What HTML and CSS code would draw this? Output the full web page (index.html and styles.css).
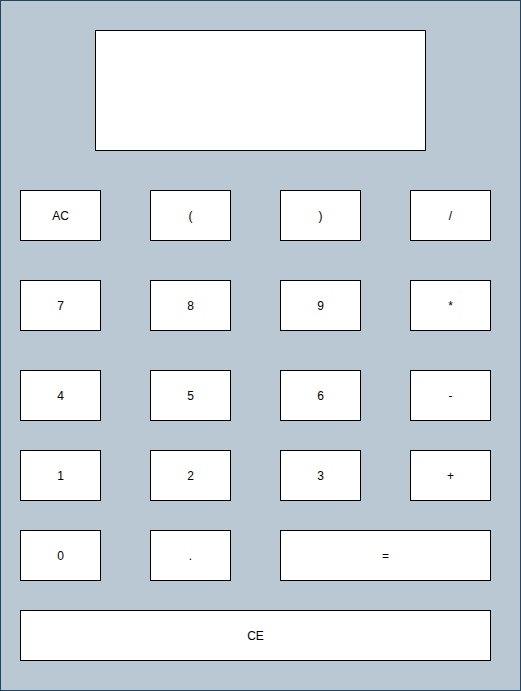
FILE: index.html
```html
<!DOCTYPE html>
<html lang="en">
<head>
<meta charset="utf-8">
<meta name="viewport" content="width=device-width, initial-scale=1">
<title>Calculator</title>
<link rel="stylesheet" href="styles.css">
</head>
<body>
<main class="calculator">
  <input class="display" type="text" aria-label="Display" readonly>
  <div class="keypad">
    <div class="row spaced">
      <button class="key" type="button">AC</button>
      <button class="key" type="button">(</button>
      <button class="key" type="button">)</button>
      <button class="key" type="button">/</button>
    </div>
    <div class="row spaced">
      <button class="key" type="button">7</button>
      <button class="key" type="button">8</button>
      <button class="key" type="button">9</button>
      <button class="key" type="button">*</button>
    </div>
    <div class="row">
      <button class="key" type="button">4</button>
      <button class="key" type="button">5</button>
      <button class="key" type="button">6</button>
      <button class="key" type="button">-</button>
    </div>
    <div class="row">
      <button class="key" type="button">1</button>
      <button class="key" type="button">2</button>
      <button class="key" type="button">3</button>
      <button class="key" type="button">+</button>
    </div>
    <div class="row">
      <button class="key" type="button">0</button>
      <button class="key" type="button">.</button>
      <button class="key wide" type="button">=</button>
    </div>
    <div class="row">
      <button class="key full" type="button">CE</button>
    </div>
  </div>
</main>
</body>
</html>
```

FILE: styles.css
```css
* {
  box-sizing: border-box;
}

body {
  margin: 0;
  font-family: "Liberation Sans", Arial, sans-serif;
  font-size: 12px;
}

.calculator {
  display: flex;
  flex-direction: column;
  gap: 39px;
  min-height: 100vh;
  padding: 29px 29px 29px 19px;
  background: #bac8d3;
  border: 1px solid #23445d;
}

.display {
  height: 121px;
  margin: 0 65px 0 75px;
  padding: 8px 16px;
  font: inherit;
  font-size: 32px;
  text-align: right;
  color: #000;
  background: #fff;
  border: 1px solid #000;
  border-radius: 0;
}

.keypad {
  display: flex;
  flex-direction: column;
  gap: 29px;
}

.row {
  display: grid;
  grid-template-columns: repeat(4, 1fr);
  column-gap: 49px;
}

.spaced {
  margin-bottom: 10px;
}

.key {
  height: 51px;
  padding: 0;
  font: inherit;
  color: #000;
  background: #fff;
  border: 1px solid #000;
  border-radius: 0;
}

.wide {
  grid-column: span 2;
}

.full {
  grid-column: 1 / -1;
}
```
